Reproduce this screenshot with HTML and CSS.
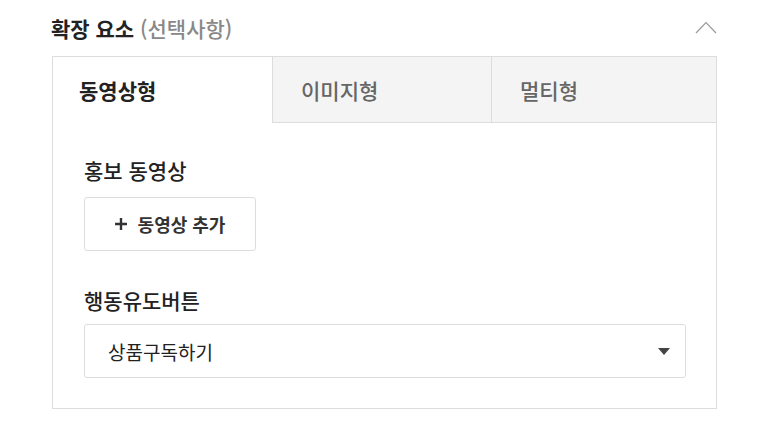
FILE: index.html
```html
<!DOCTYPE html>
<html lang="ko">
<head>
    <meta charset="UTF-8">
    <meta name="viewport" content="width=device-width, initial-scale=1.0">
    <title>확장 요소</title>
    <link rel="stylesheet" href="styles.css">
</head>
<body>
    <section class="extension">
        <div class="extension-header">
            <h2 class="extension-title">확장 요소 <span class="optional">(선택사항)</span></h2>
            <svg class="collapse-icon" width="22" height="13" viewBox="0 0 22 13">
                <polyline points="1,12 11,1.5 21,12" fill="none" stroke="#999" stroke-width="1.2"/>
            </svg>
        </div>

        <div class="extension-box">
            <div class="tabs">
                <div class="tab active">동영상형</div>
                <div class="tab">이미지형</div>
                <div class="tab">멀티형</div>
            </div>

            <div class="tab-content">
                <div class="field">
                    <div class="field-label">홍보 동영상</div>
                    <button class="add-button">
                        <svg class="plus" width="12" height="12" viewBox="0 0 12 12">
                            <path d="M6 0V12M0 6H12" stroke="#333" stroke-width="2.4"/>
                        </svg>
                        동영상 추가
                    </button>
                </div>

                <div class="field">
                    <div class="field-label">행동유도버튼</div>
                    <div class="select-box">
                        <span>상품구독하기</span>
                        <span class="select-arrow"></span>
                    </div>
                </div>
            </div>
        </div>
    </section>
</body>
</html>
```

FILE: styles.css
```css
body {
    margin: 0;
    padding: 0;
    background-color: #fff;
    font-family: "Noto Sans CJK KR", "Noto Sans", sans-serif;
    color: #222;
}

.extension {
    width: 665px;
    margin-left: 52px;
}

.extension-header {
    display: flex;
    justify-content: space-between;
    align-items: center;
    height: 56px;
}

.extension-title {
    margin: 0 0 0 -1px;
    font-size: 21px;
    line-height: 28px;
    font-weight: 700;
    color: #222;
    margin-top: -1px;
}

.optional {
    font-weight: 500;
    color: #888;
}

.collapse-icon {
    margin-top: -1px;
}

.extension-box {
    border: 1px solid #ddd;
    height: 351px;
}

.tabs {
    display: grid;
    grid-template-columns: 219px 219px 1fr;
    height: 66px;
}

.tab {
    display: flex;
    align-items: center;
    padding-left: 28px;
    font-size: 21px;
    font-weight: 500;
    color: #666;
    background-color: #f4f4f4;
    border-left: 1px solid #ddd;
    border-bottom: 1px solid #ddd;
}

.tab.active {
    padding-left: 26px;
    background-color: #fff;
    color: #222;
    font-weight: 700;
    border-left: none;
    border-bottom: none;
}

.tab-content {
    padding: 33px 30px 0 31px;
}

.field + .field {
    margin-top: 35px;
}

.field-label {
    font-size: 21px;
    line-height: 28px;
    font-weight: 500;
    color: #222;
    margin-bottom: 13px;
}

.add-button {
    display: flex;
    align-items: center;
    justify-content: center;
    width: 172px;
    height: 54px;
    padding: 0;
    background-color: #fff;
    border: 1px solid #ddd;
    border-radius: 3px;
    font-family: inherit;
    font-size: 18px;
    font-weight: 700;
    color: #333;
}

.plus {
    margin-right: 11px;
}

.select-box {
    display: flex;
    justify-content: space-between;
    align-items: center;
    height: 52px;
    margin-top: -3px;
    padding: 0 15px 0 23px;
    border: 1px solid #ddd;
    border-radius: 3px;
    font-size: 19px;
    color: #222;
}

.select-arrow {
    width: 0;
    height: 0;
    border-left: 6px solid transparent;
    border-right: 6px solid transparent;
    border-top: 7px solid #444;
}
```
